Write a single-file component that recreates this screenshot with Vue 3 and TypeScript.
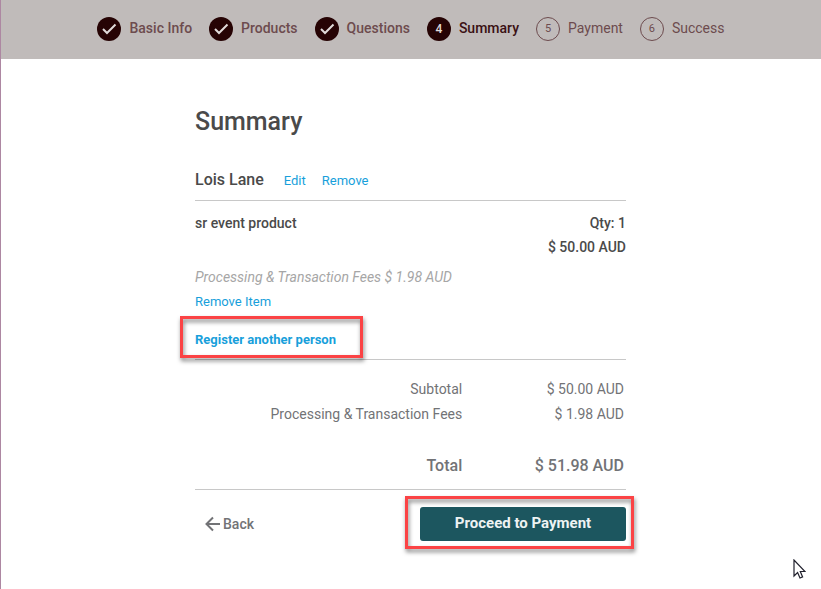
<script setup lang="ts">
interface Step {
  label: string
  state: 'done' | 'current' | 'upcoming'
}

const steps: Step[] = [
  { label: 'Basic Info', state: 'done' },
  { label: 'Products', state: 'done' },
  { label: 'Questions', state: 'done' },
  { label: 'Summary', state: 'current' },
  { label: 'Payment', state: 'upcoming' },
  { label: 'Success', state: 'upcoming' },
]

const totals = [
  { label: 'Subtotal', amount: '$ 50.00 AUD', grand: false },
  { label: 'Processing & Transaction Fees', amount: '$ 1.98 AUD', grand: false },
  { label: 'Total', amount: '$ 51.98 AUD', grand: true },
]
</script>

<template>
  <div class="page">
    <header class="header">
      <ol class="steps">
        <li v-for="(step, index) in steps" :key="step.label" class="step" :class="step.state">
          <span class="marker">
            <svg v-if="step.state === 'done'" width="24" height="24" viewBox="0 0 24 24" aria-hidden="true">
              <path d="M6 12l4 4L18.500 7.500" fill="none" stroke="#e0dad9" stroke-width="2" />
            </svg>
            <template v-else>{{ index + 1 }}</template>
          </span>
          <span class="step-label">{{ step.label }}</span>
        </li>
      </ol>
    </header>

    <main class="content">
      <h1 class="title">Summary</h1>

      <section class="person">
        <h2 class="name">Lois Lane</h2>
        <a class="link" href="#edit">Edit</a>
        <a class="link" href="#remove">Remove</a>
      </section>

      <section class="item">
        <div class="item-row">
          <span>sr event product</span>
          <span class="price"><span>Qty: 1</span><span>$ 50.00 AUD</span></span>
        </div>
        <p class="fees">Processing &amp; Transaction Fees $ 1.98 AUD</p>
        <a class="link" href="#remove-item">Remove Item</a>
        <div class="register">
          <span class="marked marked-link">
            <a class="link strong" href="#register">Register another person</a>
          </span>
        </div>
      </section>

      <table class="totals">
        <tbody>
          <tr v-for="row in totals" :key="row.label" :class="{ grand: row.grand }">
            <th scope="row">{{ row.label }}</th>
            <td>{{ row.amount }}</td>
          </tr>
        </tbody>
      </table>

      <footer class="actions">
        <button class="back" type="button">
          <svg width="16" height="16" viewBox="0 0 16 16" aria-hidden="true">
            <path d="M15 8H2M8 1.500L1.500 8L8 14.500" fill="none" stroke="currentColor" stroke-width="2" />
          </svg>
          Back
        </button>
        <span class="marked marked-button">
          <button class="proceed" type="button">Proceed to Payment</button>
        </span>
      </footer>
    </main>

    <svg class="cursor" width="13" height="20" viewBox="0 0 13 20" aria-hidden="true">
      <path d="M1 1v16l3.600-3.500L7 19l2.600-1.100L7.300 12.500H12z" fill="#fff" stroke="#20202c" stroke-width="1.200" />
    </svg>
  </div>
</template>

<style>
body {
  margin: 0;
  background: #fff;
}
</style>

<style scoped>
.page {
  position: relative;
  box-sizing: border-box;
  min-height: 100vh;
  border-left: 1px solid #ad87a2;
  font-family: Roboto, "Liberation Sans", sans-serif;
  font-size: 14px;
  line-height: 24px;
  color: #4a4a4a;
}

.header {
  padding: 17px 0 18px;
  background: #c0bbba;
}

.steps {
  display: flex;
  justify-content: center;
  gap: 17px;
  margin: 0;
  padding: 0;
  list-style: none;
}

.step {
  display: flex;
  align-items: center;
  gap: 8px;
  font-weight: 500;
  color: #6d4b4e;
  white-space: nowrap;
}

.step.current {
  color: #3a1013;
}

.step.upcoming {
  font-weight: 400;
}

.step-label {
  line-height: 22px;
  padding-bottom: 2px;
}

.marker {
  display: flex;
  align-items: center;
  justify-content: center;
  box-sizing: border-box;
  width: 24px;
  height: 24px;
  border-radius: 50%;
  background: #260304;
  color: #e0dad9;
  font-size: 12px;
}

.upcoming .marker {
  border: 1px solid #6d4b4e;
  background: none;
  color: #6d4b4e;
  font-size: 11px;
}

.content {
  max-width: 431px;
  margin: 0 auto;
  padding: 46px 1px 24px 0;
}

.title {
  margin: 0;
  font-size: 25px;
  line-height: 34px;
  font-weight: 500;
}

.person {
  display: flex;
  align-items: baseline;
  gap: 16px;
  margin-top: 29px;
  padding-bottom: 7px;
  border-bottom: 1px solid #c8c8c8;
}

.name {
  margin: 0 4px 0 0;
  font-size: 16px;
  font-weight: 500;
}

.link {
  color: #189fdb;
  font-size: 13px;
  text-decoration: none;
}

.strong {
  font-weight: 700;
}

.item {
  padding-top: 10px;
  border-bottom: 1px solid #c8c8c8;
}

.item-row {
  display: flex;
  justify-content: space-between;
  font-weight: 500;
}

.price {
  display: flex;
  flex-direction: column;
  align-items: flex-end;
}

.fees {
  margin: 6px 0 0;
  font-style: italic;
  color: #a6a6a6;
}

.register {
  padding: 13px 0 7px;
}

.marked {
  position: relative;
  display: inline-block;
}

.marked::after {
  content: "";
  position: absolute;
  border: 3px solid #fb4345;
  filter: drop-shadow(1px 3px 2px rgba(0, 0, 0, 0.5));
  pointer-events: none;
}

.marked-link::after {
  inset: -11px -27px -6px -15px;
}

.marked-button::after {
  inset: -11px -8px -8px -15px;
}

.totals {
  width: 100%;
  margin-top: 17px;
  border-collapse: collapse;
  color: #727376;
}

.totals th,
.totals td {
  padding: 0 2px 1px 0;
  font-weight: 400;
  text-align: right;
}

.totals th {
  width: 62%;
  padding-right: 0;
}

.totals .grand th,
.totals .grand td {
  padding-top: 27px;
  font-size: 16px;
  font-weight: 500;
}

.actions {
  display: flex;
  align-items: center;
  justify-content: space-between;
  margin-top: 10px;
  padding-top: 17px;
  border-top: 1px solid #c8c8c8;
}

.back {
  display: flex;
  align-items: center;
  gap: 2px;
  margin: 0;
  padding: 0 10px;
  border: 0;
  background: none;
  color: #727376;
  font: inherit;
  font-weight: 500;
}

.proceed {
  display: block;
  width: 206px;
  height: 34px;
  padding: 0 0 2px;
  border: 0;
  border-radius: 3px;
  background: #1c565f;
  color: #eef3f3;
  font: inherit;
  font-size: 15px;
  font-weight: 700;
}

.cursor {
  position: absolute;
  right: 15px;
  bottom: 10px;
}
</style>
